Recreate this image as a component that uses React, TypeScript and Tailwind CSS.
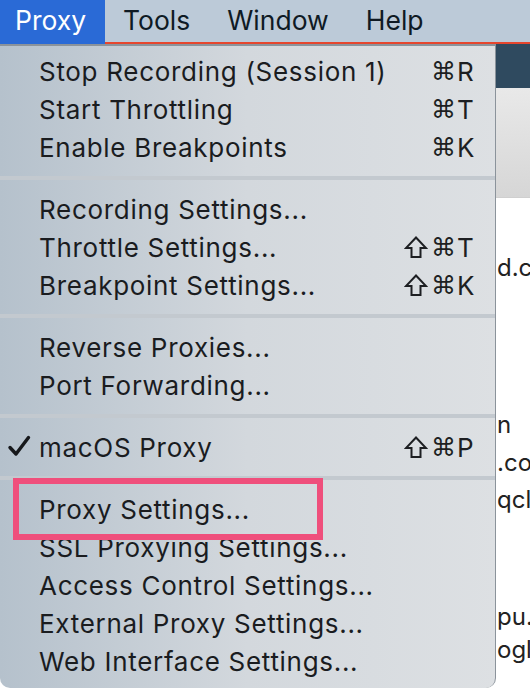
import { FC } from 'react';

type Item = {
	label: string;
	keys?: string;
	shift?: boolean;
	checked?: boolean;
};

const groups: Item[][] = [
	[
		{ label: 'Stop Recording (Session 1)', keys: 'R' },
		{ label: 'Start Throttling', keys: 'T' },
		{ label: 'Enable Breakpoints', keys: 'K' },
	],
	[
		{ label: 'Recording Settings...' },
		{ label: 'Throttle Settings...', keys: 'T', shift: true },
		{ label: 'Breakpoint Settings...', keys: 'K', shift: true },
	],
	[
		{ label: 'Reverse Proxies...' },
		{ label: 'Port Forwarding...' },
	],
	[{ label: 'macOS Proxy', keys: 'P', shift: true, checked: true }],
	[
		{ label: 'Proxy Settings...' },
		{ label: 'SSL Proxying Settings...' },
		{ label: 'Access Control Settings...' },
		{ label: 'External Proxy Settings...' },
		{ label: 'Web Interface Settings...' },
	],
];

// bits of the window behind the menu that peek out on the right
const sideText = [
	{ top: 'mt-[55px]', text: 'd.c' },
	{ top: 'mt-[127px]', text: 'n' },
	{ top: 'mt-[8px]', text: '.co' },
	{ top: 'mt-[7px]', text: 'qcl' },
	{ top: 'mt-[87px]', text: 'pu.c' },
	{ top: 'mt-[3px]', text: 'ogle' },
];

const ShiftIcon: FC = () => (
	<svg width="24" height="24" viewBox="0 0 24 24" fill="none" stroke="#1d1f22" strokeWidth="2" strokeLinejoin="miter">
		<path d="M12 2.5 L22 13 H16.5 V22 H7.5 V13 H2 Z" />
	</svg>
);

const CheckIcon: FC = () => (
	<svg width="24" height="24" viewBox="0 0 24 24" fill="none" stroke="#16181b" strokeWidth="3.4" strokeLinecap="round" strokeLinejoin="round">
		<path d="M3 13.5 L9 20 L21.5 3.5" />
	</svg>
);

const Shortcut: FC<{ item: Item }> = ({ item }) => {
	if (!item.keys) return null;
	return (
		<div className="flex items-center text-[#1d1f22]">
			<span className="w-[28px] flex justify-center">{item.shift && <ShiftIcon />}</span>
			<span className="w-[27px] text-center text-[25px] leading-none" style={{ fontFamily: '"DejaVu Sans", sans-serif' }}>⌘</span>
			<span className="w-[18px] text-[26px]">{item.keys}</span>
		</div>
	);
};

const MenuRow: FC<{ item: Item }> = ({ item }) => (
	<div className="flex h-[38px] items-center justify-between pl-[39px] pr-[20px] relative">
		{item.checked && (
			<span className="absolute left-[7px] top-[6px]"><CheckIcon /></span>
		)}
		<span className="text-[26px] tracking-[0.7px]">{item.label}</span>
		<Shortcut item={item} />
	</div>
);

const App: FC = () => {
	return (
		<div className="w-[530px] h-[690px] overflow-hidden bg-white relative text-[#1a1c1f]" style={{ fontFamily: 'Inter, "Noto Sans", sans-serif' }}>
			{/* menu bar */}
			<div className="flex h-[42px] bg-[#bccad8] text-[26.5px] text-[#0f1a24] items-center">
				<div className="h-full flex items-center bg-[#2a6ad6] text-white px-[15px] w-[105px]">Proxy</div>
				<div className="pl-[18px] pr-[19px]">Tools</div>
				<div className="px-[18px]">Window</div>
				<div className="px-[19px]">Help</div>
			</div>
			<div className="flex h-[2px]">
				<div className="w-[105px] bg-[#2a6ad6]" />
				<div className="flex-1 bg-[#e6462e]" />
			</div>

			<div className="flex">
				{/* dropdown */}
				<div className="w-[496px] shrink-0 h-[644px] rounded-b-[10px] border-t-2 border-r border-[#8b939b] bg-gradient-to-r from-[#b5c1cc] via-[#d3d8dd] to-[#dde0e3] pt-[6px] relative">
					{groups.map((group, gi) => (
						<div key={gi}>
							{gi > 0 && (
								<div className="py-[10px]">
									<div className="h-[4px] bg-[#c3c9cf]" />
								</div>
							)}
							{group.map((item) => (
								<MenuRow key={item.label} item={item} />
							))}
						</div>
					))}
					<div className="absolute left-[13px] top-[432px] w-[310px] h-[62px] border-[6px] border-[#ef4f7c]" />
				</div>

				{/* window content behind */}
				<div className="flex-1 flex flex-col overflow-hidden">
					<div className="h-[44px] bg-[#2f4a5f]" />
					<div className="h-[110px] bg-gradient-to-b from-[#e9e9e9] to-[#d6d6d6] border-b border-[#cfcfcf]" />
					<div className="flex flex-col text-[24px] text-[#222] leading-[30px] whitespace-nowrap pl-[1px]">
						{sideText.map((s) => (
							<div key={s.text} className={s.top}>{s.text}</div>
						))}
					</div>
				</div>
			</div>
		</div>
	);
};

export default App;
